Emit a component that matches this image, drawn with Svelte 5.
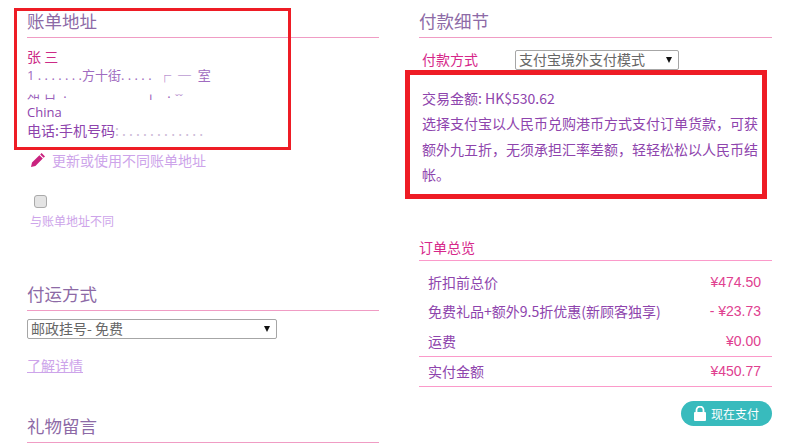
<script>
	const rows = [
		{ label: '折扣前总价', price: '¥474.50' },
		{ label: '免费礼品+额外9.5折优惠(新顾客独享)', price: '- ¥23.73' },
		{ label: '运费', price: '¥0.00' }
	];
</script>

<div class="page">
	<div class="col left">
		<section class="billing">
			<h2>账单地址</h2>
			<div class="name">张 三</div>
			<div class="line smudge">1 . . . . . . .方十街. . . . .  ┌  ─  室</div>
			<div class="line smudge two">知 日  .                       十   . ∞</div>
			<div class="line">China</div>
			<div class="line">电话:手机号码<span class="faint">: . . . . . . . . . . . .</span></div>
		</section>
		<a class="update" href="#top">
			<svg width="16" height="16" viewBox="0 0 16 16">
				<path d="M11.6 1 15 4.4 13.6 5.8 10.2 2.4ZM9.4 3.2 12.8 6.6 5.4 14 1 15 2 10.6Z" fill="#c9227e" />
			</svg>
			更新或使用不同账单地址
		</a>
		<input class="check" type="checkbox" />
		<div class="same">与账单地址不同</div>

		<h2 class="ship">付运方式</h2>
		<div class="select ship-select">邮政挂号- 免费</div>
		<a class="more" href="#top">了解详情</a>

		<h2 class="gift">礼物留言</h2>
	</div>

	<div class="col right">
		<h2>付款细节</h2>
		<div class="method">
			<span>付款方式</span>
			<div class="select method-select">支付宝境外支付模式</div>
		</div>
		<div class="desc">
			<div>交易金额: HK$530.62</div>
			<div>选择支付宝以人民币兑购港币方式支付订单货款，可获额外九五折，无须承担汇率差额，轻轻松松以人民币结帐。</div>
		</div>

		<h3>订单总览</h3>
		<div class="rows">
			{#each rows as r}
				<div class="row">
					<span>{r.label}</span>
					<span class="price">{r.price}</span>
				</div>
			{/each}
		</div>
		<div class="row total">
			<span>实付金额</span>
			<span class="price">¥450.77</span>
		</div>
		<div class="actions">
			<button>
				<svg width="12" height="15" viewBox="0 0 12 15">
					<path d="M2.5 6V4a3.5 3.5 0 0 1 7 0v2" fill="none" stroke="#fff" stroke-width="1.8" />
					<rect x="0" y="6" width="12" height="9" rx="1" fill="#fff" />
				</svg>
				现在支付
			</button>
		</div>
	</div>

	<div class="mark mark-left"></div>
	<div class="mark mark-right"></div>
</div>

<style>
	:global(body) {
		background: #fff;
	}
	.page {
		position: relative;
		display: flex;
		height: 445px;
		overflow: hidden;
		padding-left: 27px;
		box-sizing: border-box;
		font-family: 'Noto Sans CJK SC', sans-serif;
		font-size: 14px;
		color: #8e44ad;
	}
	.col {
		display: flex;
		flex-direction: column;
		align-items: flex-start;
	}
	.left {
		width: 352px;
	}
	.right {
		width: 353px;
		margin-left: 40px;
	}
	h2 {
		align-self: stretch;
		margin: 0;
		padding-top: 8px;
		height: 29px;
		border-bottom: 1px solid #f09cc4;
		font-size: 17.5px;
		line-height: 26px;
		font-weight: 400;
		color: #8d6aa6;
	}
	.billing {
		align-self: stretch;
	}
	.name {
		margin-top: 8px;
		line-height: 20px;
		color: #cc2a86;
	}
	.line {
		line-height: 18.4px;
		white-space: pre;
		font-family: 'Open Sans', 'Noto Sans CJK SC', sans-serif;
		font-size: 13px;
	}
	.line:last-child {
		font-family: 'Noto Sans CJK SC', sans-serif;
		font-size: 14px;
	}
	.smudge {
		color: #a06bc0;
	}
	.two {
		clip-path: inset(10px 0 0 0);
		color: #9a62bb;
	}
	.faint {
		color: #cdbbd8;
	}
	.update {
		display: flex;
		align-items: center;
		gap: 6px;
		margin: 10px 0 0 3px;
		line-height: 20px;
		color: #cda4ea;
		text-decoration: none;
	}
	.check {
		appearance: none;
		box-sizing: border-box;
		width: 13px;
		height: 13px;
		margin: 25px 0 0 7px;
		border: 1px solid #aaa;
		border-radius: 3px;
		background: #e4e4e4;
	}
	.same {
		margin: 4px 0 0 3px;
		font-size: 12px;
		line-height: 17px;
		color: #cda4ea;
	}
	.ship {
		margin-top: 44px;
	}
	.select {
		position: relative;
		box-sizing: border-box;
		height: 20px;
		padding-left: 3px;
		border: 1px solid #a6a6a6;
		border-radius: 2px;
		font-size: 14px;
		line-height: 17px;
		color: #666;
		white-space: nowrap;
	}
	.select::after {
		content: '';
		position: absolute;
		top: 6px;
		right: 6px;
		border-style: solid;
		border-width: 6px 3.5px 0;
		border-color: #111 transparent transparent;
	}
	.ship-select {
		width: 250px;
		margin-top: 8px;
	}
	.more {
		margin-top: 16px;
		line-height: 20px;
		color: #cda4ea;
	}
	.gift {
		margin-top: 30px;
	}
	.method {
		display: flex;
		align-items: center;
		margin-top: 11px;
		padding-left: 3px;
		color: #d6278a;
	}
	.method span {
		width: 93px;
		padding-bottom: 2px;
	}
	.method-select {
		width: 164px;
	}
	.desc {
		width: 342px;
		margin: 15px 0 0 3px;
		line-height: 25.4px;
	}
	h3 {
		align-self: stretch;
		margin: 48px 0 0;
		height: 24px;
		border-bottom: 1px solid #fb9aca;
		font-size: 14px;
		line-height: 22px;
		font-weight: 400;
		color: #d6278a;
	}
	.rows {
		align-self: stretch;
		padding: 7px 0 0;
		border-bottom: 1px solid #fb9aca;
	}
	.row {
		display: flex;
		justify-content: space-between;
		align-items: center;
		height: 29px;
		padding: 0 11px 0 9px;
		white-space: nowrap;
	}
	.rows .row:last-child {
		height: 30px;
	}
	.total {
		align-self: stretch;
		height: 29px;
		border-bottom: 1px solid #fb9aca;
	}
	.price {
		font-family: 'Liberation Sans', sans-serif;
		color: #e0408f;
	}
	.actions {
		align-self: stretch;
		display: flex;
		justify-content: flex-end;
		margin-top: 14px;
	}
	button {
		display: flex;
		align-items: center;
		justify-content: center;
		gap: 5px;
		width: 91px;
		height: 25px;
		padding: 0;
		border: 0;
		border-radius: 12.5px;
		background: #38bbbd;
		color: #fff;
		font-family: 'Noto Sans CJK SC', sans-serif;
		font-size: 12px;
	}
	.mark {
		position: absolute;
		box-sizing: border-box;
		border-style: solid;
		border-color: #ee1c25;
		pointer-events: none;
	}
	.mark-left {
		left: 14px;
		top: 8px;
		width: 277px;
		height: 142px;
		border-width: 3px;
	}
	.mark-right {
		left: 405px;
		top: 70px;
		width: 362px;
		height: 129px;
		border-width: 5px;
	}
</style>
